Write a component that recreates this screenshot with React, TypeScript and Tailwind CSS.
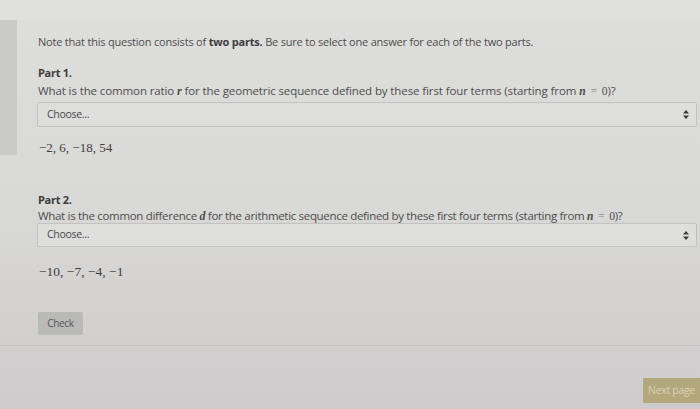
import React from "react";

const sans = { fontFamily: '"Open Sans", "Noto Sans", sans-serif' };
const serif = { fontFamily: '"Liberation Serif", "DejaVu Serif", serif' };

function Arrows() {
  return (
    <svg width="6" height="9" viewBox="0 0 6 9" className="text-[#3a3a3a]">
      <path d="M3 0 L6 3.5 H0 Z" fill="currentColor" />
      <path d="M3 9 L6 5.5 H0 Z" fill="currentColor" />
    </svg>
  );
}

function Select({ h }: { h: string }) {
  return (
    <div
      className={`ml-[37px] mr-[3px] ${h} flex items-center justify-between border border-[#c2c2c0] bg-[#dededc] pl-[9px] pr-[7px] rounded-[2px]`}
    >
      <span className="text-[10.5px] text-[#4a4a4a] tracking-[-0.3px]">Choose...</span>
      <Arrows />
    </div>
  );
}

function Eq() {
  return (
    <>
      <i className="font-bold" style={serif}>n</i>
      <span style={serif} className="text-[#8a8a8a] mx-[5px]">=</span>
      <span style={serif}>0</span>
    </>
  );
}

export default function App() {
  return (
    <div
      className="w-[700px] h-[409px] overflow-hidden bg-gradient-to-b from-[#dededc] via-[#d9d9d7] to-[#cdcbcb] text-[#4d4d4d]"
      style={sans}
    >
      <div className="h-[20px] bg-[#e0e0de]" />
      <div className="flex">
        <div className="w-[17px] h-[135px] bg-[#cacac8]" />
        <div className="flex-1" />
      </div>
      <div className="-mt-[135px] flex flex-col">
        <p className="ml-[38px] mt-[15px] text-[11px] tracking-[-0.2px] leading-[14px]">
          Note that this question consists of <b className="text-[#3c3c3c]">two parts.</b> Be sure to select one answer for each of the two parts.
        </p>
        <p className="ml-[38px] mt-[17px] text-[11px] tracking-[-0.3px] leading-[14px] font-bold text-[#3c3c3c]">Part 1.</p>
        <p className="ml-[38px] mt-[4px] text-[11.5px] tracking-[-0.11px] leading-[14px] whitespace-nowrap">
          What is the common ratio <i className="font-bold text-[12px]" style={serif}>r</i> for the geometric sequence defined by these first four terms (starting from{" "}
          <Eq />)?
        </p>
        <div className="mt-[4px]">
          <Select h="h-[25px]" />
        </div>
        <p className="ml-[39px] mt-[14px] text-[13px] leading-[14px] text-[#3f3f3f]" style={serif}>
          −2, 6, −18, 54
        </p>
        <p className="ml-[38px] mt-[38px] text-[11px] tracking-[-0.3px] leading-[14px] font-bold text-[#3c3c3c]">Part 2.</p>
        <p className="ml-[38px] mt-[2px] text-[11.5px] tracking-[-0.32px] leading-[14px] whitespace-nowrap">
          What is the common difference <i className="font-bold text-[12px]" style={serif}>d</i> for the arithmetic sequence defined by these first four terms (starting from{" "}
          <Eq />)?
        </p>
        <div className="mt-[0px]">
          <Select h="h-[24px]" />
        </div>
        <p className="ml-[39px] mt-[18px] text-[13.5px] leading-[14px] text-[#3f3f3f]" style={serif}>
          −10, −7, −4, −1
        </p>
        <div className="ml-[38px] mt-[33px] w-[45px] h-[23px] flex items-center justify-center bg-[#b9b9b7] rounded-[2px] text-[10px] tracking-[-0.3px] text-[#555]">
          Check
        </div>
        <div className="mt-[10px] h-px bg-[#c4c2c2]" />
        <div className="flex justify-end mt-[32px]">
          <div className="w-[57px] h-[25px] flex items-center justify-center bg-[#b3a77c] text-[10.5px] tracking-[-0.3px] text-[#d9d2b6]">
            Next page
          </div>
        </div>
      </div>
    </div>
  );
}
